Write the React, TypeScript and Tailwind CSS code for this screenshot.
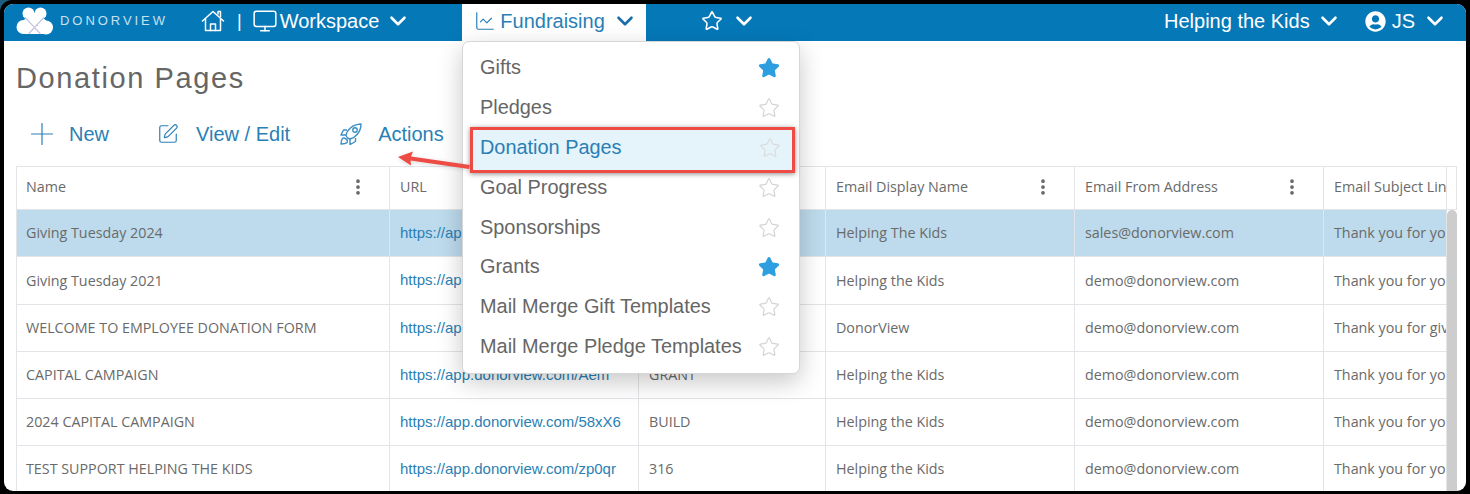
import { ChartLine, ChevronDown, EllipsisVertical, Monitor, Plus, SquarePen, Star } from "lucide-react";
import { FaUserCircle } from "react-icons/fa";

const menuItems = [
  { label: "Gifts", starred: true, h: "h-10" },
  { label: "Pledges", starred: false, h: "h-10" },
  { label: "Donation Pages", starred: false, h: "h-[46px]", active: true },
  { label: "Goal Progress", starred: false, h: "h-10" },
  { label: "Sponsorships", starred: false, h: "h-[39px]" },
  { label: "Grants", starred: true, h: "h-[40px]" },
  { label: "Mail Merge Gift Templates", starred: false, h: "h-10" },
  { label: "Mail Merge Pledge Templates", starred: false, h: "h-10" },
];

const rows = [
  { name: "Giving Tuesday 2024", url: "https://app.donorview.com/GT24x", code: "GT24", display: "Helping The Kids", from: "sales@donorview.com", subject: "Thank you for your gift", h: "h-[47px]", selected: true },
  { name: "Giving Tuesday 2021", url: "https://app.donorview.com/GT21x", code: "GT21", display: "Helping the Kids", from: "demo@donorview.com", subject: "Thank you for your gift", h: "h-[48px]" },
  { name: "WELCOME TO EMPLOYEE DONATION FORM", url: "https://app.donorview.com/Wlcm", code: "EMP", display: "DonorView", from: "demo@donorview.com", subject: "Thank you for giving", h: "h-[47px]" },
  { name: "CAPITAL CAMPAIGN", url: "https://app.donorview.com/Aem", code: "GRANT", display: "Helping the Kids", from: "demo@donorview.com", subject: "Thank you for your gift", h: "h-[47px]" },
  { name: "2024 CAPITAL CAMPAIGN", url: "https://app.donorview.com/58xX6", code: "BUILD", display: "Helping the Kids", from: "demo@donorview.com", subject: "Thank you for your gift", h: "h-[47px]" },
  { name: "TEST SUPPORT HELPING THE KIDS", url: "https://app.donorview.com/zp0qr", code: "316", display: "Helping the Kids", from: "demo@donorview.com", subject: "Thank you for your gift", h: "h-[47px]" },
];

function Logo() {
  return (
    <svg width="40" height="28" viewBox="0 0 40 28" className="shrink-0">
      {/* cloud lobes */}
      <circle cx="8.500" cy="20" r="7" fill="#fff" />
      <circle cx="13" cy="16" r="5" fill="#fff" />
      <circle cx="31" cy="20.500" r="7" fill="#fff" />
      <circle cx="27" cy="16.500" r="5" fill="#fff" />
      <rect x="8" y="19" width="24" height="8" rx="3" fill="#fff" />
      {/* heart */}
      <circle cx="13.500" cy="6.500" r="6" fill="#fff" />
      <circle cx="25.500" cy="6.500" r="6" fill="#fff" />
      <path d="M8 9 19.500 21 31 9 25 3 19.500 6 14 3z" fill="#fff" />
      {/* ribbon */}
      <path d="M9.500 10 19.500 20.500 29.500 10M19.500 20.500 13.500 27M19.500 20.500 25.500 27" fill="none" stroke="#c4c4de" strokeWidth="1.200" />
    </svg>
  );
}

function HomeIcon() {
  return (
    <svg width="24" height="24" viewBox="0 0 24 24" fill="none" stroke="#fff" strokeWidth="1.500" strokeLinejoin="round" strokeLinecap="round" className="ml-[33px] shrink-0">
      <path d="M1.500 12 12 2.500 22.500 12" />
      <path d="M4.500 10v11.500h15V10" />
      <path d="M9.500 21.500v-6.500h5v6.500" />
      <path d="M17 5V2.500h2.500V7.500" />
    </svg>
  );
}

function Rocket() {
  return (
    <svg width="22" height="22" viewBox="0 0 22 22" fill="none" stroke="#3b8fc4" strokeWidth="1.400" strokeLinejoin="round">
      <path d="M7.500 15 6 12.500C7 6.500 12.500 1.500 21 1 21 9 15.500 14.500 10 16z" />
      <circle cx="15" cy="7" r="2.200" />
      <path d="M7 7H3.500L1 12h5M15.500 15v3.500l-5.500 3v-5.500" />
      <path d="M2.500 15.500C1 17 1 20 1 21c1.500 0 4.500 0 6-1.500 1-1.500 0-3-1-3.500-1-.8-2.500-1.500-3.500-.5z" />
    </svg>
  );
}

function HeaderCell({ label, className, menu = true }: { label: string; className: string; menu?: boolean }) {
  return (
    <div className={`flex items-center justify-between overflow-hidden whitespace-nowrap border-r border-[#e2e4e8] pb-[2px] pr-[21px] ${className}`}>
      <span>{label}</span>
      {menu && <EllipsisVertical size={20} strokeWidth={2.500} className="shrink-0 text-[#666]" />}
    </div>
  );
}

function Cell({ children, className }: { children: React.ReactNode; className: string }) {
  return (
    <div className={`flex h-full items-center overflow-hidden whitespace-nowrap border-r border-[#e2e4e8] ${className}`}>
      {children}
    </div>
  );
}

export default function App() {
  return (
    <div className="h-[494px] w-[1470px] overflow-hidden bg-[#1b5e80] font-['Liberation_Sans',sans-serif]">
      <div className="h-full rounded-tl-[12px] bg-black p-[4px] pb-[3px]">
        <div className="relative h-full overflow-hidden rounded-[9px] bg-white">
          {/* Nav bar */}
          <div className="flex h-[37px] items-center bg-[#0578b8] pb-[3px] text-[20px] text-white">
            <div className="ml-[11px]">
              <Logo />
            </div>
            <span className="ml-[5px] text-[13px] tracking-[2.950px] text-[#c8e0ef]">DONORVIEW</span>
            <HomeIcon />
            <span className="ml-[12px] text-[18px]">|</span>
            <Monitor size={26} strokeWidth={1.400} className="ml-[10px]" />
            <span className="ml-[2px]">Workspace</span>
            <ChevronDown size={26} strokeWidth={2.400} className="ml-[6px]" />
            <div className="-mb-[3px] ml-[51px] flex h-[37px] w-[184px] items-center bg-white pb-[3px] pl-[12px] text-[#2a7fb5]">
              <ChartLine size={22} strokeWidth={1.300} />
              <span className="ml-[4px]">Fundraising</span>
              <ChevronDown size={26} strokeWidth={2.400} className="ml-[7px] text-[#1a6ea8]" />
            </div>
            <Star size={22} strokeWidth={1.700} className="ml-[55px]" />
            <ChevronDown size={26} strokeWidth={2.400} className="ml-[8px]" />
            <span className="ml-auto">Helping the Kids</span>
            <ChevronDown size={26} strokeWidth={2.400} className="ml-[6px]" />
            <FaUserCircle size={21} className="ml-[23px]" />
            <span className="ml-[6px]">JS</span>
            <ChevronDown size={26} strokeWidth={2.400} className="ml-[7px] mr-[18px]" />
          </div>

          {/* Title and toolbar */}
          <h1 className="ml-[12px] mt-[19px] text-[29px] leading-[36px] tracking-[1.600px] text-[#666]">Donation Pages</h1>
          <div className="ml-[26px] mt-[26px] flex h-[24px] items-center text-[20px] text-[#2a7fb5]">
            <Plus size={36} strokeWidth={0.800} className="-ml-[6px] shrink-0" />
            <span className="ml-[9px]">New</span>
            <SquarePen size={22} strokeWidth={1.300} className="ml-[48px]" />
            <span className="ml-[17px]">View / Edit</span>
            <div className="ml-[50px]">
              <Rocket />
            </div>
            <span className="ml-[16px]">Actions</span>
          </div>

          {/* Grid */}
          <div className="ml-[12px] mt-[20px] w-[1441px] border-l border-t border-[#e2e4e8] font-['Open_Sans',sans-serif] text-[14.300px] text-[#6a6a6a]">
            <div className="flex h-[43px] items-stretch border-b border-[#e2e4e8]">
              <HeaderCell label="Name" className="w-[373px] pl-[9px]" />
              <HeaderCell label="URL" className="w-[249px] pl-[10px]" />
              <HeaderCell label="Code" className="w-[187px] pl-[10px]" />
              <HeaderCell label="Email Display Name" className="w-[249px] pl-[10px]" />
              <HeaderCell label="Email From Address" className="w-[249px] pl-[10px]" />
              <HeaderCell label="Email Subject Line" className="w-[123px] pl-[10px]" menu={false} />
              <div className="flex-1 border-r border-[#e2e4e8]" />
            </div>
            <div className="relative">
              {rows.map((row) => (
                <div
                  key={row.name}
                  className={`flex items-center border-b border-[#e2e4e8] ${row.h} ${row.selected ? "bg-[#bddbec]" : "bg-white"}`}
                >
                  <Cell className="w-[373px] pl-[9px]">{row.name}</Cell>
                  <Cell className="w-[249px] pl-[10px] font-['Liberation_Sans',sans-serif] text-[15px] text-[#2a7fb5]">{row.url}</Cell>
                  <Cell className="w-[187px] pl-[10px]">{row.code}</Cell>
                  <Cell className="w-[249px] pl-[10px]">{row.display}</Cell>
                  <Cell className="w-[249px] pl-[10px]">{row.from}</Cell>
                  <Cell className="w-[123px] pl-[10px]">{row.subject}</Cell>
                  <div className="h-full flex-1 bg-white" />
                </div>
              ))}
              {/* Scrollbar thumb */}
              <div className="absolute bottom-0 right-0 top-0 w-[10px] rounded-t-[5px] bg-[#cdcdcd]" />
            </div>
          </div>

          {/* Fundraising dropdown */}
          <div className="absolute left-[458px] top-[37px] w-[338px] rounded-[7px] border border-[#d6d6d6] bg-white pb-[6px] pl-[17px] pr-[19px] pt-[6px] text-[19.900px] text-[#666] shadow-[0_8px_24px_rgba(0,0,0,0.22)]">
            {menuItems.map((item) =>
              item.active ? (
                <div
                  key={item.label}
                  className={`relative -mb-[5px] -ml-[10px] -mr-[15px] -mt-[1px] flex items-center justify-between border-[3px] border-[#ee4b45] bg-[#e5f3fa] pb-[4px] pl-[7px] pr-[11px] text-[#2a7fb5] shadow-[0_1px_5px_rgba(0,0,0,0.45)] ${item.h}`}
                >
                  <span>{item.label}</span>
                  <Star size={22} strokeWidth={1.300} className="text-[#d9dcde]" />
                </div>
              ) : (
                <div key={item.label} className={`flex items-center justify-between ${item.h}`}>
                  <span>{item.label}</span>
                  {item.starred ? (
                    <Star size={22} className="fill-[#2d9fe0] text-[#2d9fe0]" />
                  ) : (
                    <Star size={22} strokeWidth={1.300} className="text-[#d4d4d4]" />
                  )}
                </div>
              ),
            )}
          </div>

          {/* Annotation arrow */}
          <svg width="80" height="24" viewBox="0 0 80 24" className="absolute left-[392px] top-[144px] drop-shadow-sm">
            <path d="M2 9 17 3.500 15 8.500 74 17 73 21 14.500 12.500 15 17.500z" fill="#ee4b45" />
          </svg>
        </div>
      </div>
    </div>
  );
}
